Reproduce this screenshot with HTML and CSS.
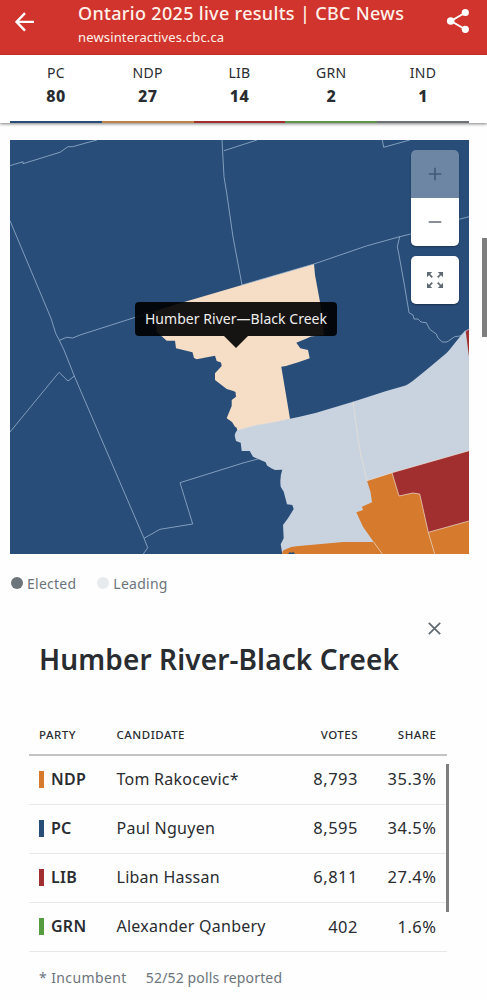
FILE: index.html
```html
<!DOCTYPE html>
<html lang="en">
<head>
    <meta charset="UTF-8">
    <meta name="viewport" content="width=device-width, initial-scale=1.0">
    <title>Ontario 2025 live results | CBC News</title>
    <link rel="stylesheet" href="styles.css">
</head>
<body>
    <header class="topbar">
        <svg class="back" width="20" height="20" viewBox="0 0 20 20"><path d="M10 1.2L1.5 9.9L10 18.6M1.5 9.9H19" /></svg>
        <div class="page-info">
            <div class="page-title">Ontario 2025 live results | CBC News</div>
            <div class="page-url">newsinteractives.cbc.ca</div>
        </div>
        <svg class="share" width="24" height="26" viewBox="0 0 24 26">
            <path d="M19.5 4.5L5 13L19.5 21.5" />
            <circle cx="19.3" cy="4.5" r="3.6" />
            <circle cx="4.7" cy="13" r="3.8" />
            <circle cx="19.3" cy="21.3" r="3.6" />
        </svg>
    </header>

    <nav class="seats">
        <div class="seat pc"><span>PC</span><b>80</b></div>
        <div class="seat ndp"><span>NDP</span><b>27</b></div>
        <div class="seat lib"><span>LIB</span><b>14</b></div>
        <div class="seat grn"><span>GRN</span><b>2</b></div>
        <div class="seat ind"><span>IND</span><b>1</b></div>
    </nav>

    <main>
        <div class="map">
            <svg class="ridings" width="459" height="414" viewBox="10 140 459 414">
                <rect class="fill-pc" x="10" y="140" width="459" height="414" />
                <path class="fill-leading-pc" d="M236.7 427.7L237.3 430Q234 434 235 437L236 441L240.7 442.7L241.7 451L249.7 451L253 456.7L265.7 462.3L267 465.5L271.3 468.3L275 470L282.3 469.7Q279.5 477 280.7 486.7L283.7 491.7L287 504.3L292.3 505L293.7 509L288 518.3L283 525L283.7 538.3L280.7 544.3L282.3 554H382L469 451V329L464.7 331L454.7 343.3Q448 352 446.3 353.3L426.3 370L413 380.7Q407 385 404.7 385.7L386.3 391L353 401.7L316.3 412.7L299.7 416.7L290 418.7L243 427Z" />
                <path class="fill-leading-ndp" d="M155 311L185 301.7L242 285L314 264L315 275L320 302L324 335L311 336.5L306 338.7L296.3 342.7L300.3 348.3L308 350L309.7 358.3L299 362L286 366L281.3 366.7L290 418.7L274.7 422L256.3 425L243 428.3L237.5 430L236.7 427.7L235 426.7L232 422L226.7 418.3L230 410L231.7 406V400L236 396.7L235.5 392L233.3 391L226.7 389L215 380V373.3L221.7 366L221 362.5L216.7 361L215 355.7L196.7 359.3L194 358L192.5 352.3L176 348.3L175 340.7H166.7L156.7 331.7Z" />
                <path class="fill-ndp" d="M282.3 554Q282 550 286.3 549Q291 546.5 296.3 546.3L343 542H373.7L363 526.7L356.3 512.3L363 510L362 506.7L372 502.3L370.5 492L367 480.7L392.3 472.7L469 500V554Z" />
                <path class="fill-lib" d="M392 472.7L469 450.7V521L428.3 532.3L419.7 494L413 493L399 496ZM465.7 331L469 329V357Z" />
                <path class="fill-pc" d="M288 554L290 552L292 553L293 551.5L295 554Z" />
                <path class="border" d="M10 165.7L23 161.7V163.7L60 152.3L68 146.7H72.7L87 142.7L97 140M222 140L224 176.7L226.7 193L233 237L242 285M224 150.7L257 140M10 220.7L51 318.3L55.7 333.3L59.3 340.3L64 350L74.3 376L144 538.3L147.7 547.7L143.3 554M59.3 340.3L66.7 337.3L72.7 338L80 335L155 311M242 285L314 264L366.3 246L399.7 236.7L409.7 234.3L459 219.3L469 216.7M382.3 140L383.7 147.3L409.7 140" />
                <path class="border" d="M399.7 236.7L397.3 246.7L399 255L404.7 286.7L409 312.7L413 315L414 319H418L421 322L426.3 322.7L429.7 329.3L436.3 334L438 338L442.3 342H447L454.7 336.7L460 336L469 329M10 432L59 372.3L68 381L74.3 376M144 538.3L160 529.3L192.7 524L180 482.7L244 462.7L258 459" />
                <path class="border light" d="M353 401.7L358 438.3L361 456L367 480.7L392 472.7L469 450.7M392 472.7L399 496L413 493L419.7 494L428.3 532.3L469 521M428.3 532.3L434.7 554M373.7 542L382.3 554M237 430L256.3 425L290 418.7" />
            </svg>
            <div class="tooltip">Humber River—Black Creek</div>
            <div class="controls">
                <div class="zoom">
                    <button class="zoom-in"><svg width="14" height="14" viewBox="0 0 14 14"><path d="M7 .7V13.3M.7 7H13.3" /></svg></button>
                    <button><svg width="14" height="14" viewBox="0 0 14 14"><path d="M.7 7H13.3" /></svg></button>
                </div>
                <button class="fit">
                    <svg width="18" height="18" viewBox="0 0 18 18">
                        <path class="heads" d="M1 1H6.2L1 6.2ZM17 1V6.2L11.8 1ZM1 17V11.8L6.2 17ZM17 17H11.8L17 11.8Z" />
                        <path d="M2 2L6.3 6.3M16 2L11.7 6.3M2 16L6.3 11.7M16 16L11.7 11.7" />
                    </svg>
                </button>
            </div>
        </div>

        <div class="legend">
            <span class="dot"></span><span class="label">Elected</span>
            <span class="dot leading"></span><span class="label">Leading</span>
        </div>

        <section class="riding">
            <button class="close"><svg width="13" height="13" viewBox="0 0 13 13"><path d="M.8 .8L12.2 12.2M12.2 .8L.8 12.2" /></svg></button>
            <h1>Humber River-Black Creek</h1>
            <div class="table-wrap">
                <table>
                    <thead>
                        <tr><th class="party">Party</th><th class="candidate">Candidate</th><th class="votes">Votes</th><th class="share-col">Share</th></tr>
                    </thead>
                    <tbody>
                        <tr><td class="party ndp">NDP</td><td class="name">Tom Rakocevic*</td><td class="num">8,793</td><td class="num">35.3%</td></tr>
                        <tr><td class="party pc">PC</td><td class="name">Paul Nguyen</td><td class="num">8,595</td><td class="num">34.5%</td></tr>
                        <tr><td class="party lib">LIB</td><td class="name">Liban Hassan</td><td class="num">6,811</td><td class="num">27.4%</td></tr>
                        <tr><td class="party grn">GRN</td><td class="name">Alexander Qanbery</td><td class="num">402</td><td class="num">1.6%</td></tr>
                    </tbody>
                </table>
                <div class="table-scroll"></div>
            </div>
            <div class="notes"><span>* Incumbent</span><span class="polls">52/52 polls reported</span></div>
        </section>
    </main>
    <div class="page-scroll"></div>
</body>
</html>
```
FILE: styles.css
```css
* {
    box-sizing: border-box;
}
body {
    margin: 0;
    height: 1000px;
    overflow: hidden;
    position: relative;
    background: #fefefe;
    color: #292c30;
    font-family: "Noto Sans", sans-serif;
}
button {
    border: none;
    padding: 0;
    background: white;
    display: flex;
    align-items: center;
    justify-content: center;
}
svg {
    display: block;
    fill: none;
}
.topbar {
    height: 55px;
    background: #d0342c;
    color: #fff1ea;
    display: flex;
    padding: 0 17px 0 15px;
}
.back {
    margin-top: 12px;
    stroke: white;
    stroke-width: 2.4;
}
.page-info {
    margin-left: 43px;
    flex: 1;
    white-space: nowrap;
}
.page-title {
    font-size: 18px;
    line-height: 27px;
    font-weight: 500;
    letter-spacing: 0.32px;
}
.page-url {
    font-size: 13px;
    line-height: 21px;
    letter-spacing: 0.15px;
}
.share {
    margin-top: 8px;
    stroke: white;
    stroke-width: 2;
}
.share circle {
    fill: white;
    stroke: none;
}
.seats {
    display: flex;
    height: 68px;
    padding: 0 18px 0 10px;
    background: white;
    box-shadow: 0 1px 3px rgba(0, 0, 0, 0.5);
}
.seat {
    flex: 1;
    display: flex;
    flex-direction: column;
    align-items: center;
    padding-top: 6px;
    font-size: 14px;
    line-height: 23px;
    border-bottom: 2px solid;
}
.seat span {
    letter-spacing: 0.3px;
}
.seat b {
    font-size: 16px;
    line-height: 24px;
    font-weight: 800;
    letter-spacing: 0.5px;
}
.seat span, .seat b {
    color: #292c30;
}
.pc { border-color: #284d79; }
.ndp { border-color: #d67a2d; }
.lib { border-color: #a12f2f; }
.grn { border-color: #559b40; }
.ind { border-color: #6e7277; }
.seat.ndp { border-color: #bd8349; }
.seat.grn { border-color: #5d944b; }
.map {
    position: relative;
    width: 459px;
    height: 414px;
    margin: 17px 0 0 10px;
}
.fill-pc { fill: #284d79; }
.fill-ndp { fill: #d67a2d; }
.fill-lib { fill: #a12f2f; }
.fill-leading-pc { fill: #c9d3df; }
.fill-leading-ndp { fill: #f5dec5; }
.border {
    stroke: #a9c0d8;
    stroke-width: 0.7;
}
.light {
    stroke: #ecdfd5;
}
.tooltip {
    position: absolute;
    left: 125px;
    top: 162px;
    width: 202px;
    height: 34px;
    border-radius: 4px;
    background: rgba(0, 0, 0, 0.91);
    color: #eee;
    font-size: 14px;
    line-height: 33px;
    letter-spacing: 0.04px;
    text-align: center;
    white-space: nowrap;
}
.tooltip::after {
    content: "";
    position: absolute;
    left: 89px;
    top: 34px;
    border: 12px solid transparent;
    border-top-color: rgba(0, 0, 0, 0.91);
    border-bottom: none;
}
.controls {
    position: absolute;
    top: 10px;
    right: 10px;
    width: 48px;
}
.controls button {
    width: 48px;
    height: 48px;
}
.controls svg {
    stroke: #606a74;
    stroke-width: 1.7;
}
.controls .heads {
    fill: #606a74;
    stroke: none;
}
.zoom {
    border-radius: 5px;
    overflow: hidden;
    box-shadow: 0 1px 2px rgba(0, 0, 0, 0.3);
}
.controls .zoom-in {
    background: rgba(255, 255, 255, 0.32);
}
.controls .zoom-in svg {
    stroke: #435b7b;
}
.controls .fit {
    margin-top: 10px;
    border-radius: 5px;
    box-shadow: 0 1px 2px rgba(0, 0, 0, 0.4);
}
.legend {
    display: flex;
    align-items: center;
    height: 20px;
    margin: 19px 0 0 11px;
    color: #6c747b;
    font-size: 14px;
}
.dot {
    width: 12px;
    height: 12px;
    border-radius: 50%;
    background: #6c757b;
    margin-right: 4px;
}
.leading {
    background: #e8ebee;
    margin-left: 21px;
}
.label {
    letter-spacing: 0.25px;
}
.riding {
    width: 418px;
    margin: 28px 0 0 29px;
}
.close {
    width: 14px;
    height: 14px;
    margin-left: 398px;
    background: none;
}
.close svg {
    stroke: #606a72;
    stroke-width: 1.7;
}
h1 {
    margin: 4px 0 0 10px;
    font-size: 28px;
    line-height: 40px;
    font-weight: 600;
    letter-spacing: 0.12px;
    white-space: nowrap;
}
.table-wrap {
    position: relative;
    margin-top: 36px;
}
table {
    width: 418px;
    border-collapse: collapse;
    table-layout: fixed;
}
th {
    height: 40px;
    padding: 0 0 0 10px;
    font-size: 11.5px;
    font-weight: 500;
    text-align: left;
    text-transform: uppercase;
    letter-spacing: 0.5px;
    border-bottom: 2px solid #c4c4c4;
}
th.party { width: 77.5px; }
th.candidate { width: 172px; }
th.votes { width: 90px; }
th.votes, th.share-col {
    padding: 0 10.5px 0 0;
    text-align: right;
}
td {
    height: 49.2px;
    padding: 0 0 2px 10px;
    font-size: 16px;
    letter-spacing: 0.25px;
    border-bottom: 1px solid #e6e8ea;
    white-space: nowrap;
}
td.num {
    padding: 0 10.5px 2px 0;
    text-align: right;
    font-size: 16.5px;
    letter-spacing: 0.5px;
}
td.party {
    font-weight: 600;
    border-bottom-color: #e6e8ea;
}
td.party::before {
    content: "";
    display: inline-block;
    width: 5px;
    height: 17px;
    margin-right: 7px;
    vertical-align: -3px;
    background: #284d79;
}
td.ndp::before { background: #d67a2d; }
td.lib::before { background: #a12f2f; }
td.grn::before { background: #559b40; }
.table-scroll {
    position: absolute;
    left: 417px;
    top: 49px;
    width: 3px;
    height: 148px;
    background: #7e7e7e;
}
.notes {
    display: flex;
    gap: 19px;
    margin: 16px 0 0 10px;
    color: #6c747b;
    font-size: 14px;
    line-height: 20px;
    letter-spacing: 0.4px;
}
.polls {
    letter-spacing: 0.15px;
}
.page-scroll {
    position: absolute;
    right: 0;
    top: 238px;
    width: 5px;
    height: 99px;
    background: #7e7e7e;
}
```
